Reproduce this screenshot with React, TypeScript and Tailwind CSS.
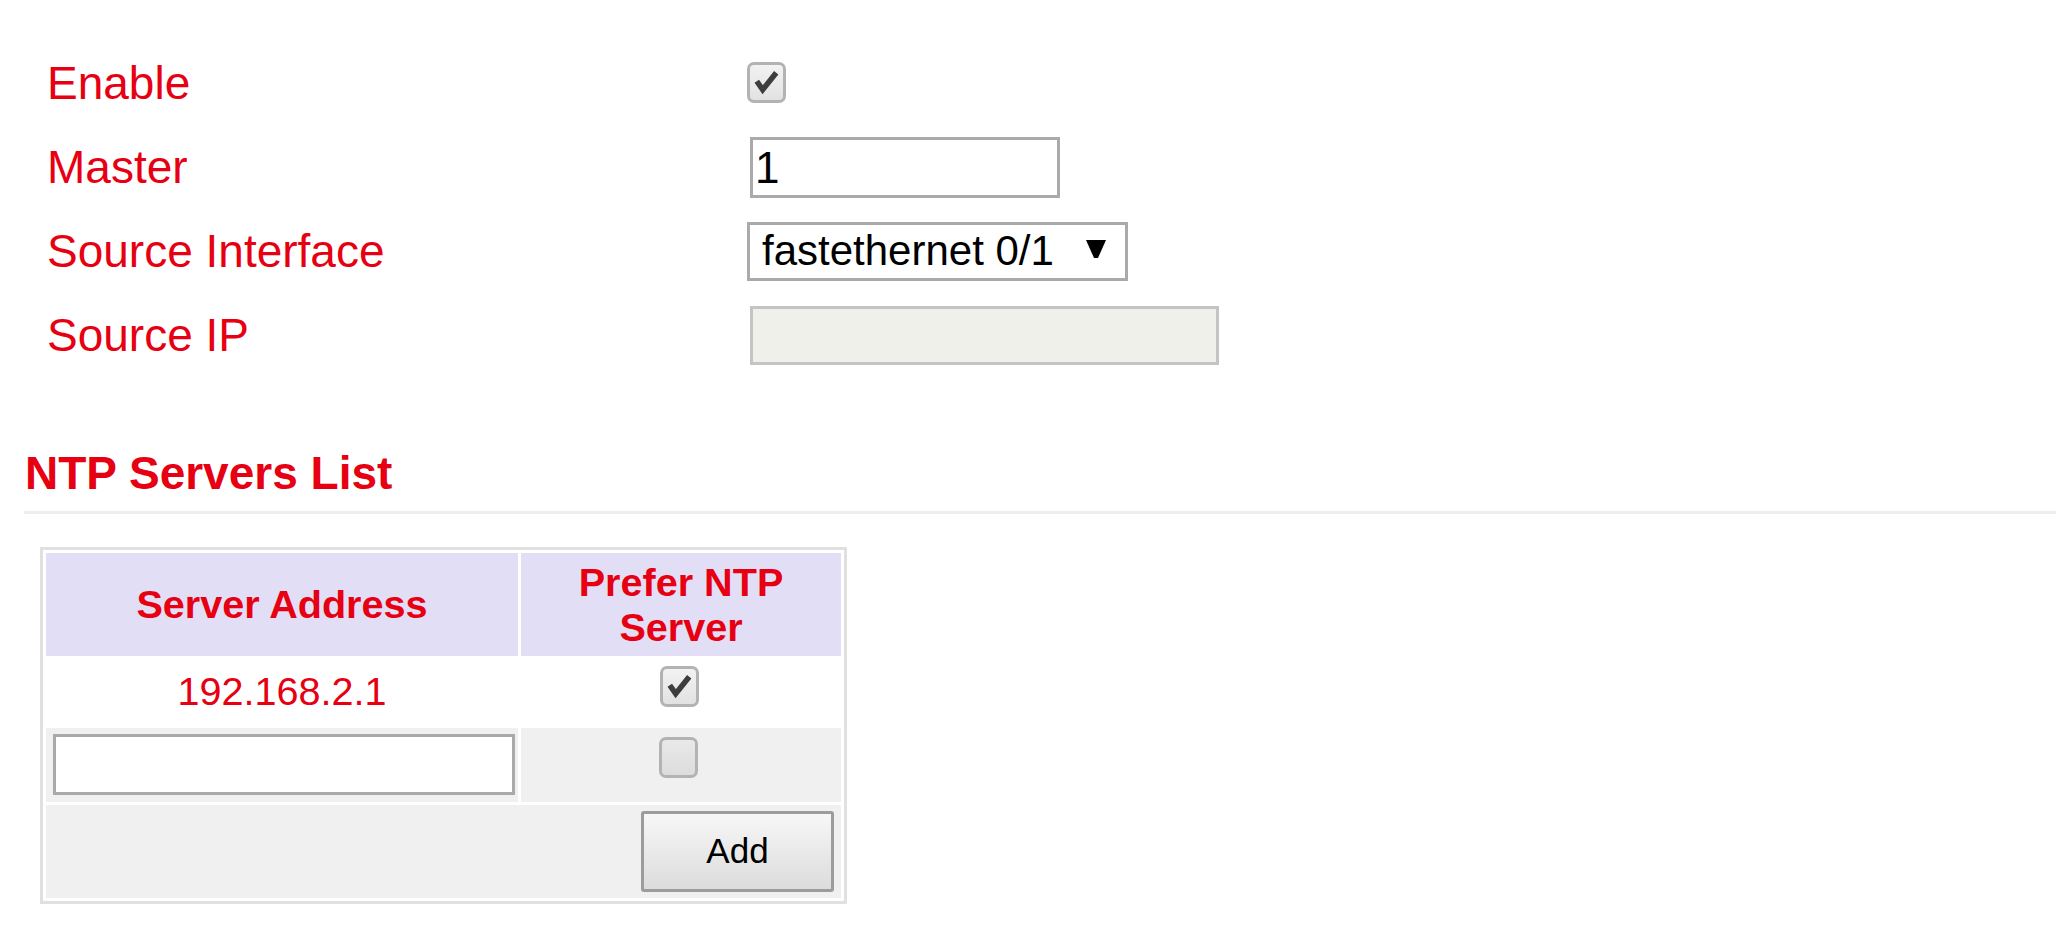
import React from 'react';

const Check = () => (
  <svg viewBox="0 0 39 41" className="absolute inset-0 h-full w-full">
    <polyline points="8,19 15,29 31,9" fill="none" stroke="#3d3d3d" strokeWidth="6.5" strokeLinejoin="miter" />
  </svg>
);

function Checkbox({ checked }: { checked?: boolean }) {
  return (
    <div
      className={
        'relative h-[41px] w-[39px] rounded-[7px] border-[3px] border-[#b3b3b3] ' +
        (checked ? 'bg-gradient-to-b from-[#f2f2f2] to-[#e2e2e2]' : 'bg-gradient-to-b from-[#e9e9e9] to-[#dcdcdc]')
      }
    >
      {checked && <Check />}
    </div>
  );
}

const rows = ['Enable', 'Master', 'Source Interface', 'Source IP'];

export default function App() {
  return (
    <div className="min-h-screen bg-white font-['Liberation_Sans',Arial,sans-serif] text-[#e60012]">
      <div className="pt-[41px] pl-[47px]">
        {rows.map((label, i) => (
          <div key={label} className="flex h-[84px] items-center">
            <div className="w-[700px] text-[46px] leading-[53px]">{label}</div>
            {i === 0 && (
              <div className="-mt-[2px]">
                <Checkbox checked />
              </div>
            )}
            {i === 1 && (
              <div className="ml-[3px] h-[61px] w-[310px] border-[3px] border-[#aaaaaa] bg-white pl-[2px] text-[44px] leading-[55px] text-black">
                1
              </div>
            )}
            {i === 2 && (
              <div className="flex h-[59px] w-[381px] items-center justify-between border-[3px] border-[#aaaaaa] bg-white pl-[12px] pr-[19px] text-[42px] text-black">
                <span className="leading-[48px]">fastethernet 0/1</span>
                <svg viewBox="0 0 20 18" className="-mt-[5px] h-[18px] w-[20px]">
                  <polygon points="0,0 20,0 12,18 8,18" fill="#000" />
                </svg>
              </div>
            )}
            {i === 3 && <div className="ml-[3px] h-[59px] w-[469px] border-[3px] border-[#c4c4c4] bg-[#f0f0eb]" />}
          </div>
        ))}
      </div>

      <h2 className="ml-[25px] mt-[70px] text-[46px] font-bold leading-[53px]">NTP Servers List</h2>
      <div className="ml-[24px] mt-[11px] h-[3px] bg-[#eeeeee]" />

      <table className="ml-[40px] mt-[33px] w-[807px] table-fixed border-separate border-spacing-[3px] border-[3px] border-[#e0e0e0]">
        <colgroup>
          <col className="w-[472px]" />
          <col className="w-[320px]" />
        </colgroup>
        <thead>
          <tr className="h-[103px]">
            <th className="bg-[#e2def5] p-0 text-center align-middle text-[39.6px] font-bold leading-[45px]">Server Address</th>
            <th className="bg-[#e2def5] p-0 text-center align-middle text-[39.6px] font-bold leading-[45px]">
              Prefer NTP
              <br />
              Server
            </th>
          </tr>
        </thead>
        <tbody>
          <tr className="h-[66px]">
            <td className="bg-white p-0 text-center align-middle text-[39.6px]">192.168.2.1</td>
            <td className="bg-white p-0 pt-[7px] align-top">
              <div className="flex justify-center pr-[3px]">
                <Checkbox checked />
              </div>
            </td>
          </tr>
          <tr className="h-[74px]">
            <td className="bg-[#f0f0f0] p-0 pl-[7px] pt-[6px] align-top">
              <div className="h-[61px] w-[462px] border-[3px] border-[#a9a9a9] bg-white" />
            </td>
            <td className="bg-[#f0f0f0] p-0 pt-[9px] align-top">
              <div className="flex justify-center pr-[6px]">
                <Checkbox />
              </div>
            </td>
          </tr>
          <tr className="h-[93px]">
            <td colSpan={2} className="bg-[#f0f0f0] p-0 pr-[7px] pt-[6px] align-top">
              <div className="flex justify-end">
                <button className="h-[81px] w-[193px] rounded-[3px] border-[3px] border-[#9c9c9c] bg-gradient-to-b from-[#f7f7f7] to-[#dcdcdc] text-[35px] text-black">
                  Add
                </button>
              </div>
            </td>
          </tr>
        </tbody>
      </table>
    </div>
  );
}
